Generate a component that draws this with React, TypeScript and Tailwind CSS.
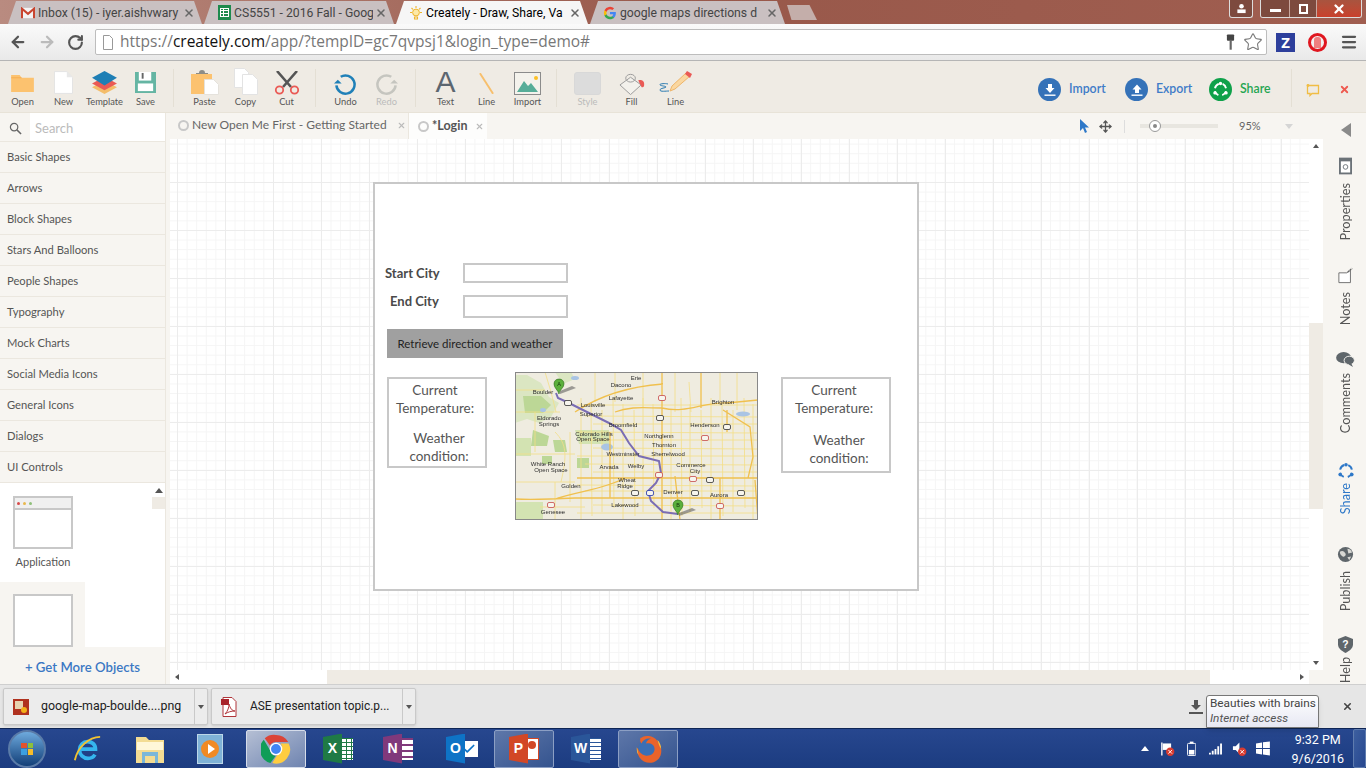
import { ArrowLeft, ArrowRight, Check, Menu, Move, RotateCw, Star, X } from 'lucide-react';
import type { ReactNode } from 'react';

const chromeFont = "font-['Open_Sans',sans-serif]";
const shellFont = "font-['Roboto',sans-serif]";

const shapes = [
  'Basic Shapes',
  'Arrows',
  'Block Shapes',
  'Stars And Balloons',
  'People Shapes',
  'Typography',
  'Mock Charts',
  'Social Media Icons',
  'General Icons',
  'Dialogs',
  'UI Controls',
];

// Browser tab strip
const BrowserTab = ({ title, icon, active, width }: { title: string; icon: ReactNode; active?: boolean; width: string }) => (
  <div
    className={`${width} h-[23px] flex items-center pl-[12px] pr-[7px] gap-[2px] [clip-path:polygon(0_100%,8px_0,calc(100%-8px)_0,100%_100%)] ${shellFont} ${
      active ? 'bg-[#f6f6f6] text-black' : 'bg-[#c9c0c1] text-[#444]'
    }`}
  >
    <span className="w-4 h-4 shrink-0 flex items-center justify-center">{icon}</span>
    <span className="flex-1 overflow-hidden whitespace-nowrap text-[12.2px] leading-[16px]">{title}</span>
    <X size={12} strokeWidth={3} className="shrink-0 text-[#666]" />
  </div>
);

const Gmail = () => (
  <svg viewBox="0 0 16 14" className="w-[14px] h-[12px]">
    <rect x="0" y="1" width="16" height="12" fill="#f3f3f3" />
    <path d="M1 13V2l7 6 7-6v11" fill="none" stroke="#c9442f" strokeWidth="2.4" />
  </svg>
);

const Sheets = () => (
  <div className="w-[13px] h-[15px] bg-[#1d8a4d] flex items-center justify-center">
    <div className="w-[9px] h-[9px] border border-white grid grid-cols-2 grid-rows-3">
      <span className="border-r border-b border-white" />
      <span className="border-b border-white" />
      <span className="border-r border-b border-white" />
      <span className="border-b border-white" />
      <span className="border-r border-white" />
      <span />
    </div>
  </div>
);

const Bulb = () => (
  <svg viewBox="0 0 16 16" className="w-4 h-4">
    <circle cx="8" cy="7.5" r="3.4" fill="#fde9a6" stroke="#eeb52e" />
    <path d="M8 1v2M2 7.5h2M12 7.5h2M3.5 3l1.4 1.4M12.5 3l-1.4 1.4M6.5 12h3v2h-3z" stroke="#eeb52e" strokeWidth="1.1" fill="none" />
  </svg>
);

const GoogleG = () => (
  <svg viewBox="0 0 16 16" className="w-[14px] h-[14px]">
    <path d="M14.7 8.2c0-.5 0-1-.1-1.4H8v2.7h3.8c-.2.9-.7 1.6-1.4 2.1v1.7h2.3c1.3-1.2 2-3 2-5.1z" fill="#4285f4" />
    <path d="M8 15c1.9 0 3.4-.6 4.7-1.7l-2.3-1.7c-.6.4-1.4.7-2.4.7-1.8 0-3.4-1.2-3.9-2.9H1.7V11A7 7 0 0 0 8 15z" fill="#34a853" />
    <path d="M4.1 9.4a4.2 4.2 0 0 1 0-2.8V4.8H1.7a7 7 0 0 0 0 6.2z" fill="#fbbc05" />
    <path d="M8 3.7c1 0 2 .4 2.7 1l2-2A7 7 0 0 0 1.700 4.800l2.400 1.800C4.600 4.900 6.200 3.700 8 3.700z" fill="#ea4335" />
  </svg>
);

// Creately toolbar
const Tool = ({ label, children, muted }: { label: string; children: ReactNode; muted?: boolean }) => (
  <div className="w-[41px] mt-[4px] shrink-0 flex flex-col items-center">
    <div className="h-[25px] flex items-end justify-center">{children}</div>
    <span className={`mt-[1px] text-[9.3px] leading-[12px] whitespace-nowrap ${muted ? 'text-[#bbb]' : 'text-[#555]'}`}>{label}</span>
  </div>
);

const ToolSep = () => <div className="w-px h-[38px] mt-[2px] bg-[#e4dfd4] shrink-0" />;

const RoundAction = ({ label, color, text, children, width }: { label: string; color: string; text: string; children: ReactNode; width: string }) => (
  <div className={`${width} flex items-center gap-[8px] shrink-0`}>
    <span className={`w-[23px] h-[23px] rounded-full ${color} flex items-center justify-center shrink-0`}>{children}</span>
    <span className={`text-[12.3px] font-semibold ${text}`}>{label}</span>
  </div>
);

const UpDown = ({ up }: { up?: boolean }) => (
  <svg viewBox="0 0 14 14" className="w-[14px] h-[14px]">
    <path d={up ? 'M7 1.500 2.500 6.500H5V10h4V6.500h2.500z' : 'M5 1v4H2.500L7 10l4.500-5H9V1z'} fill="#fff" />
    <rect x="1.500" y="11.500" width="11" height="1.400" fill="#fff" />
  </svg>
);

const ShareGlyph = ({ color, size }: { color: string; size: number }) => (
  <svg viewBox="0 0 20 20" width={size} height={size}>
    <path d="M3.500 8.500A7 7 0 0 1 8 3.300M12.500 3.500a7 7 0 0 1 4 5M16.500 12a7 7 0 0 1-4.500 4.600M7.500 16.600A7 7 0 0 1 3.400 12" fill="none" stroke={color} strokeWidth="2.200" />
    <circle cx="10" cy="3" r="2" fill={color} />
    <circle cx="3.500" cy="14" r="2" fill={color} />
    <circle cx="16.500" cy="14" r="2" fill={color} />
  </svg>
);

const mapLabels: [string, number, number][] = [
  ['Boulder', 28, 22], ['Erie', 121, 8], ['Dacono', 106, 15], ['Lafayette', 106, 28], ['Louisville', 78, 35], ['Superior', 76, 44],
  ['Brighton', 208, 32], ['Henderson', 190, 55], ['Broomfield', 108, 55], ['Eldorado', 34, 48], ['Springs', 34, 54],
  ['Northglenn', 144, 66], ['Thornton', 149, 75], ['Sherrelwood', 153, 84], ['Westminster', 108, 84], ['Arvada', 94, 97],
  ['Welby', 121, 96], ['Commerce', 176, 95], ['City', 180, 101], ['Wheat', 112, 110], ['Ridge', 110, 116], ['Denver', 158, 122],
  ['Aurora', 204, 125], ['Lakewood', 110, 135], ['Golden', 56, 116], ['Genesee', 38, 142], ['White Ranch', 33, 94], ['Open Space', 36, 100],
  ['Colorado Hills', 79, 64], ['Open Space', 78, 69],
];

const shields: [number, number, string][] = [
  [147, 26, '#c54a4a'], [53, 31, '#333'], [145, 46, '#333'], [190, 66, '#c54a4a'], [144, 103, '#c54a4a'], [178, 107, '#c54a4a'],
  [195, 108, '#333'], [120, 121, '#333'], [135, 121, '#2233aa'], [180, 121, '#333'], [226, 121, '#333'], [205, 134, '#c54a4a'], [36, 133, '#c54a4a'], [212, 55, '#333'],
];

const gridX = [66, 76, 87, 98, 108, 119, 128, 138, 156, 166, 175, 186, 196, 207, 218, 229, 238];
const gridY = [33, 44, 52, 60, 68, 76, 84, 92, 100, 113, 119, 133, 141];

// Static road map used inside the wireframe
const RouteMap = () => (
  <svg viewBox="0 0 243 148" className="w-full h-full block blur-[0.4px]">
    <rect width="243" height="148" fill="#efece0" />
    <path d="M0 3h12l14 8 8 14 10 6-8 14-12 6-12-4-12 4zM40 0h16l4 7-12 5z" fill="#dbe6c2" />
    <path d="M8 24h18l10 9-8 8H10zM18 58l16 6-2 10H16zM38 68h12l2 12H40zM62 86h12v10H62zM27 84h10v8H27z" fill="#bcd796" />
    <path d="M60 58h34v14H64zM0 66h16v18H0zM0 130h28v18H0z" fill="#d3e3b2" />
    {gridX.map((x, i) => (
      <path key={x} d={`M${x} ${26 + (i % 3) * 6}L${x + (i % 2)} ${148 - (i % 4) * 4}`} stroke="#f4de86" strokeWidth=".8" fill="none" />
    ))}
    {gridY.map((y, i) => (
      <path key={y} d={`M${62 + (i % 3) * 8} ${y}L243 ${y + (i % 2)}`} stroke="#f4de86" strokeWidth=".8" fill="none" />
    ))}
    <path d="M30 0l6 20 5 20M0 40h45M20 40v40M0 82h60M55 60v70M40 60c12 12 12 24 6 50M0 110h60M40 110v38M25 135h45M80 0v30M100 0v30M128 0v36M160 0v40M174 10l2 30M205 0v30M222 0v38M0 18h30" stroke="#f4de86" strokeWidth=".8" fill="none" />
    <ellipse cx="92" cy="75" rx="6" ry="3.500" fill="#a9c4e4" />
    <ellipse cx="228" cy="42" rx="7" ry="2.500" fill="#a9c4e4" />
    <ellipse cx="60" cy="6" rx="4" ry="2" fill="#a9c4e4" />
    <ellipse cx="28" cy="38" rx="3" ry="2" fill="#a9c4e4" />
    <path d="M147 0v148M0 127c20 1 40 0 60-1h183M62 106h181M147 36c25 6 40-6 65-5l31-3M208 38l27 17 3 30-5 21M100 40c15-6 30-4 47-4M186 0v36M212 38v22M148 12C120 14 90 20 60 40M160 104l5 44M205 106v42M95 126V60M40 127c24-8 50-10 70-21M240 108l3 40" stroke="#f0c04e" strokeWidth="1.300" fill="none" />
    <path d="M41 21l2 5 11 5 20 10 20 10 12 7 8 13 10 13 20 5 2 12-5 10-8 8 3 10 12 11 15 2" fill="none" stroke="#7a6db4" strokeWidth="2" />
    {shields.map(([x, y, c]) => (
      <rect key={`${x}-${y}`} x={x - 3.500} y={y - 2.500} width="7" height="5" rx="1.500" fill="#f7f5ee" stroke={c} strokeWidth=".8" />
    ))}
    {mapLabels.map(([t, x, y], i) => (
      <text key={`${t}-${i}`} x={x} y={y} fontSize="6" fill="#2c2c2c" fontFamily="Liberation Sans, sans-serif" textAnchor="middle">{t}</text>
    ))}
    <path d="M45 19l12-5 4 2-16 6zM164 141l13-5 4 2-17 6z" fill="#555" opacity=".55" />
    <path d="M39 12c0-3 2-5 5-5s5 2 5 5c0 4-5 6-5 10-1-4-5-6-5-10zM158 133c0-3 2-5 5-5s5 2 5 5c0 4-5 6-5 10-1-4-5-6-5-10z" fill="#5bb03c" stroke="#2f6c1f" strokeWidth=".6" />
    <text x="44" y="14" fontSize="5.500" fill="#12330a" textAnchor="middle" fontFamily="Liberation Sans, sans-serif">A</text>
    <text x="163" y="135" fontSize="5.500" fill="#12330a" textAnchor="middle" fontFamily="Liberation Sans, sans-serif">B</text>
    <rect x="0.500" y="0.500" width="242" height="147" fill="none" stroke="#888" />
  </svg>
);

const RailItem = ({ label, icon, blue, height, gap }: { label: string; icon: ReactNode; blue?: boolean; height: string; gap: string }) => (
  <div className={`${height} ${gap} flex flex-col items-center shrink-0`}>
    <span className="h-[18px] flex items-center justify-center">{icon}</span>
    <span className={`[writing-mode:vertical-rl] rotate-180 text-[12.7px] leading-none whitespace-nowrap ${blue ? 'text-[#2e78c8]' : 'text-[#555]'}`}>{label}</span>
  </div>
);

const TaskItem = ({ children, tone, width }: { children: ReactNode; tone?: 'open' | 'focus'; width?: string }) => (
  <div
    className={`${width ?? 'w-[60px]'} h-[38px] shrink-0 flex items-center justify-center rounded-[2px] ${
      tone === 'focus'
        ? 'border border-[#d5dcea] bg-gradient-to-br from-[#b5bfd4] to-[#6f84b0]'
        : tone === 'open'
          ? 'border border-[#8c9fc4] bg-gradient-to-br from-[#5e77a9] to-[#35548f]'
          : ''
    }`}
  >
    {children}
  </div>
);

const OfficeIcon = ({ letter, bg, lines }: { letter: string; bg: string; lines: string }) => (
  <div className="relative w-[30px] h-[30px] flex items-center">
    <div className={`absolute right-0 top-[4px] w-[17px] h-[22px] ${lines}`} />
    <div className={`relative w-[19px] h-[30px] ${bg} text-white font-bold text-[14px] flex items-center justify-center font-['Liberation_Sans',sans-serif] [clip-path:polygon(0_12%,100%_0,100%_100%,0_88%)]`}>
      {letter}
    </div>
  </div>
);

export default function App() {
  return (
    <div className="w-[1366px] h-[768px] overflow-hidden flex flex-col font-['Lato',sans-serif] bg-[#f7f5f1]">
      {/* Tab strip */}
      <div className="h-[24px] shrink-0 flex items-end pl-[8px] bg-gradient-to-r from-[#b98b80] via-[#98584a] to-[#a05e50]">
        <div className="flex gap-[2px] items-end">
          <BrowserTab title="Inbox (15) - iyer.aishvwary" icon={<Gmail />} width="w-[194px]" />
          <BrowserTab title="CS5551 - 2016 Fall - Goog" icon={<Sheets />} width="w-[190px]" />
          <BrowserTab title="Creately - Draw, Share, Va" icon={<Bulb />} active width="w-[192px]" />
          <BrowserTab title="google maps directions d" icon={<GoogleG />} width="w-[195px]" />
          <div className="w-[30px] h-[15px] mb-[4px] bg-[#c4aeaa] [clip-path:polygon(0_0,75%_0,100%_100%,15%_100%)]" />
        </div>
        <div className="ml-auto self-start flex gap-[7px] mr-[4px]">
          <div className="w-[24px] h-[18px] border border-[#ddd] border-t-0 rounded-b-[3px] bg-[#7d4a3e] flex items-center justify-center">
            <svg viewBox="0 0 12 12" className="w-[11px] h-[11px]"><circle cx="6" cy="3.500" r="2.500" fill="#fff" /><rect x="1.500" y="7" width="9" height="4" fill="#fff" /></svg>
          </div>
          <div className="w-[102px] h-[18px] border border-[#ddd] border-t-0 rounded-b-[3px] flex overflow-hidden">
            <div className="w-[28px] bg-[#7d4a3e] flex items-end justify-center pb-[5px]"><span className="w-[11px] h-[3px] bg-white" /></div>
            <div className="w-[28px] bg-[#7d4a3e] border-x border-[#c9a89f] flex items-center justify-center">
              <span className="w-[9px] h-[10px] border-2 border-white" />
            </div>
            <div className="flex-1 bg-gradient-to-b from-[#a8543f] to-[#c9402c] flex items-center justify-center">
              <X size={14} strokeWidth={4} className="text-white" />
            </div>
          </div>
        </div>
      </div>

      {/* Browser toolbar */}
      <div className={`h-[37px] shrink-0 flex items-center bg-gradient-to-b from-[#fafafa] to-[#e9e9e9] border-b border-[#b5b5b5] ${chromeFont}`}>
        <ArrowLeft size={18} strokeWidth={3} className="ml-[9px] text-[#555]" />
        <ArrowRight size={18} strokeWidth={3} className="ml-[11px] text-[#bbb]" />
        <RotateCw size={17} strokeWidth={3} className="ml-[11px] text-[#555]" />
        <div className="ml-[11px] w-[1172px] h-[26px] bg-white border border-[#bdbdbd] rounded-[2px] flex items-center pl-[6px] pr-[3px]">
          <svg viewBox="0 0 12 15" className="w-[12px] h-[15px] shrink-0"><path d="M1.500.5h6l3 3v11h-9z" fill="#fff" stroke="#999" /></svg>
          <span className="ml-[6px] text-[15.5px] whitespace-nowrap text-[#777] leading-none">
            https://<span className="text-[#111]">creately.com</span>/app/?tempID=gc7qvpsj1&amp;login_type=demo#
          </span>
          <svg viewBox="0 0 10 18" className="ml-auto w-[9px] h-[17px]"><rect x="1" y="0" width="8" height="7" rx="1" fill="#444" /><rect x="4" y="6" width="2.400" height="11" fill="#666" /></svg>
          <Star size={20} strokeWidth={1.300} className="ml-[8px] text-[#777]" />
        </div>
        <div className="ml-[9px] w-[19px] h-[19px] bg-[#2d3f9c] text-white font-bold text-[15px] flex items-center justify-center leading-none">Z</div>
        <div className="ml-[13px] w-[19px] h-[19px] rounded-full border-[3px] border-[#e0161f] flex items-center justify-center">
          <span className="w-[7px] h-[11px] rounded-t-[3px] bg-[#ef7f7f]" />
        </div>
        <Menu size={18} strokeWidth={3} className="ml-[13px] text-[#555]" />
      </div>

      {/* Creately toolbar */}
      <div className="h-[52px] shrink-0 bg-[#efebe4] border-b border-[#e8e3d8] flex items-center pl-[2px]">
        <Tool label="Open">
          <svg viewBox="0 0 24 19" className="w-[23px] h-[18px] mb-[3px]"><path d="M0 1h9l2 3h13v15H0z" fill="#fcc26f" /><path d="M0 4h11" stroke="#f6ae50" /></svg>
        </Tool>
        <Tool label="New">
          <svg viewBox="0 0 20 24" className="w-[19px] h-[23px] mb-[1px]"><path d="M.5.5h13l6 6v17H.5z" fill="#fff" stroke="#e3e3e3" /><path d="M13.500.5v6h6" fill="#e8e8e8" /></svg>
        </Tool>
        <Tool label="Template">
          <svg viewBox="0 0 26 24" className="w-[25px] h-[23px] mb-[1px]">
            <path d="M13 10 26 17 13 24 0 17z" fill="#f4bd6a" />
            <path d="M13 6 26 13 13 20 0 13z" fill="#ea5a55" />
            <path d="M13 0 26 7 13 15 0 7z" fill="#1f7fb5" />
          </svg>
        </Tool>
        <Tool label="Save">
          <svg viewBox="0 0 22 22" className="w-[21px] h-[21px] mb-[2px]">
            <rect x="0" y="0" width="22" height="22" fill="#65b5a3" />
            <rect x="4" y="0" width="13" height="9" fill="#fff" />
            <rect x="7" y="1" width="2" height="6" fill="#666" />
            <rect x="3" y="12" width="16" height="8" fill="#fff" />
          </svg>
        </Tool>
        <div className="w-[7px] shrink-0" />
        <ToolSep />
        <div className="w-[10px] shrink-0" />
        <Tool label="Paste">
          <svg viewBox="0 0 28 25" className="w-[28px] h-[25px]">
            <rect x="0" y="4" width="21" height="20" fill="#fcc26f" />
            <path d="M5 4h12v-1h-3a3 3 0 0 0-6 0H5z" fill="#8d8d88" />
            <path d="M13.500 9.500h9l5 5v10h-14z" fill="#fff" stroke="#e5e2dc" />
          </svg>
        </Tool>
        <Tool label="Copy">
          <svg viewBox="0 0 24 27" className="w-[24px] h-[27px]">
            <path d="M.5.5h10l4 4v15H.5z" fill="#fff" stroke="#e3e3e3" />
            <path d="M8.500 6.500h10l5 5v15h-15z" fill="#fff" stroke="#e3e3e3" />
          </svg>
        </Tool>
        <Tool label="Cut">
          <svg viewBox="0 0 26 24" className="w-[26px] h-[24px]">
            <path d="M3 0 17 16M23 0 9 16" stroke="#555" strokeWidth="2.600" />
            <circle cx="5.500" cy="19" r="3.700" fill="none" stroke="#ea5a55" strokeWidth="1.800" />
            <circle cx="20.500" cy="19" r="3.700" fill="none" stroke="#ea5a55" strokeWidth="1.800" />
          </svg>
        </Tool>
        <div className="w-[8px] shrink-0" />
        <ToolSep />
        <div className="w-[9px] shrink-0" />
        <Tool label="Undo">
          <svg viewBox="0 0 24 24" className="w-[23px] h-[23px]">
            <path d="M7 5a9.500 9.500 0 1 1-4.500 9" fill="none" stroke="#1f80b8" strokeWidth="2.600" />
            <path d="M0 12l4-4 4 4z" fill="#1f80b8" />
          </svg>
        </Tool>
        <Tool label="Redo" muted>
          <svg viewBox="0 0 24 24" className="w-[23px] h-[23px]">
            <path d="M17 5a9.500 9.500 0 1 0 4.500 9" fill="none" stroke="#c5c5bf" strokeWidth="2.600" />
            <path d="M24 12l-4-4-4 4z" fill="#c5c5bf" />
          </svg>
        </Tool>
        <div className="w-[8px] shrink-0" />
        <ToolSep />
        <div className="w-[9px] shrink-0" />
        <Tool label="Text">
          <span className="text-[30px] leading-[26px] text-[#5c6670] font-['Liberation_Sans',sans-serif]">A</span>
        </Tool>
        <Tool label="Line">
          <svg viewBox="0 0 16 22" className="w-[15px] h-[21px] mb-[1px]"><path d="M1 0 15 22" stroke="#f7bf6c" strokeWidth="2" /></svg>
        </Tool>
        <Tool label="Import">
          <svg viewBox="0 0 27 23" className="w-[27px] h-[23px]">
            <rect x=".5" y=".5" width="26" height="22" fill="#f4f2ec" stroke="#8b8b8b" />
            <circle cx="22" cy="6" r="2" fill="#fcc026" />
            <path d="M3 20 10 9l4 5 3-3 7 9z" fill="#57ad98" />
          </svg>
        </Tool>
        <div className="w-[8px] shrink-0" />
        <ToolSep />
        <div className="w-[10px] shrink-0" />
        <Tool label="Style" muted>
          <div className="w-[27px] h-[23px] bg-[#dcdcdc] border border-[#d8d8d8] rounded-[3px]" />
        </Tool>
        <div className="w-[3px] shrink-0" />
        <Tool label="Fill">
          <svg viewBox="0 0 27 23" className="w-[26px] h-[23px]">
            <path d="M12 5 1 13l11 10 11-10z" fill="#f3f1ec" stroke="#9a9a9a" />
            <ellipse cx="12" cy="6" rx="5" ry="4" fill="none" stroke="#9a9a9a" />
            <path d="M20 8c4-1 7 1 6 6-1 2-3 2-3 0-1-2-2-3-3-6z" fill="#ea5a55" />
          </svg>
        </Tool>
        <div className="w-[3px] shrink-0" />
        <Tool label="Line">
          <svg viewBox="0 0 33 22" className="w-[33px] h-[22px] mb-[2px]">
            <path d="M27 2 13 15l-2 5 5-2L31 5z" fill="#fad7a0" stroke="#eeb56a" />
            <path d="M26 3l2-3 5 3-2 4z" fill="#ea5a55" />
            <path d="M9 13c-4-1-9 0-8 1s6 1 6 2-6 1-6 3 6 1 9 1" fill="none" stroke="#2779b0" strokeWidth="1" />
          </svg>
        </Tool>

        <div className="ml-[342px] flex items-center">
          <RoundAction label="Import" color="bg-[#3572b8]" text="text-[#3f7cc8]" width="w-[87px] mt-[6px]"><UpDown /></RoundAction>
          <RoundAction label="Export" color="bg-[#3572b8]" text="text-[#3f7cc8]" width="w-[84px] mt-[6px]"><UpDown up /></RoundAction>
          <RoundAction label="Share" color="bg-[#0fa14a]" text="text-[#25a551]" width="w-[82px] mt-[6px]"><ShareGlyph color="#fff" size={17} /></RoundAction>
          <div className="w-px h-[38px] mt-[2px] bg-[#e4dfd4]" />
          <svg viewBox="0 0 14 14" className="ml-[14px] mt-[6px] w-[14px] h-[14px]">
            <path d="M1.500 2.500h11v8H6l-2 2v-2H1.500z" fill="none" stroke="#f0bd45" strokeWidth="1.300" />
            <circle cx="2" cy="2.500" r="1.400" fill="#f0bd45" />
          </svg>
          <X size={11} strokeWidth={4} className="ml-[19px] mt-[6px] text-[#ee5a50]" />
        </div>
      </div>

      {/* Workspace */}
      <div className="flex-1 min-h-0 flex">
        <aside className="w-[166px] shrink-0 flex flex-col border-r border-[#ebe7df]">
          <div className="h-[29px] shrink-0 flex border-b border-[#ebe7df]">
            <div className="w-[30px] flex items-center justify-center pt-[2px]">
              <svg viewBox="0 0 14 14" className="w-[13px] h-[13px]"><circle cx="5.500" cy="5.500" r="4" fill="none" stroke="#666" strokeWidth="1.300" /><path d="M8.500 8.500 13 13" stroke="#666" strokeWidth="1.600" /></svg>
            </div>
            <div className="flex-1 bg-white flex items-center pl-[5px] pt-[3px] text-[13px] text-[#bbb]">Search</div>
          </div>
          {shapes.map((s) => (
            <div key={s} className="h-[31px] shrink-0 flex items-center pl-[7px] border-b border-[#ebe7df] text-[11.2px] text-[#555]">{s}</div>
          ))}
          <div className="h-[164px] shrink-0 flex bg-white">
            <div className="w-[152px] flex flex-col">
              <div className="h-[99px] shrink-0 pl-[13px] pt-[13px]">
                <div className="w-[60px] h-[53px] border-2 border-[#c8c8c8] bg-white">
                  <div className="h-[10px] bg-[#f0f0f0] border-b-2 border-[#c8c8c8] box-content flex items-center gap-[3px] pl-[2px]">
                    <span className="w-[3px] h-[3px] rounded-full bg-[#d84a4a]" />
                    <span className="w-[3px] h-[3px] rounded-full bg-[#e8b84e]" />
                    <span className="w-[3px] h-[3px] rounded-full bg-[#8fc07a]" />
                  </div>
                </div>
                <div className="w-[60px] mt-[5px] text-center text-[11px] text-[#555] whitespace-nowrap">Application</div>
              </div>
              <div className="w-[85px] flex-1 bg-[#f7f5f1] pl-[13px] pt-[12px]">
                <div className="w-[60px] h-[53px] border-2 border-[#c8c8c8] bg-white" />
              </div>
            </div>
            <div className="flex-1 flex flex-col">
              <div className="h-[14px] flex items-center justify-center"><span className="w-0 h-0 border-x-[4px] border-x-transparent border-b-[5px] border-b-[#555]" /></div>
              <div className="h-[12px] bg-[#efebe4]" />
            </div>
          </div>
          <div className="flex-1 flex items-center justify-center pt-[4px] text-[13.2px] font-semibold text-[#3b78c4]">+ Get More Objects</div>
        </aside>

        <div className="flex-1 min-w-0 flex flex-col">
          {/* Document tabs */}
          <div className="h-[26px] shrink-0 flex items-center">
            <div className="w-[243px] h-full pl-[12px] flex items-center gap-[3px] text-[12px] text-[#666] border-r border-[#ebe7df] pb-[2px]">
              <span className="w-[11px] h-[11px] rounded-full border-2 border-[#c8c8c8] shrink-0" />
              <span className="whitespace-nowrap">New Open Me First - Getting Started</span>
              <X size={9} strokeWidth={3} className="ml-[7px] text-[#bbb] shrink-0" />
            </div>
            <div className="w-[78px] h-full pl-[9px] flex items-center gap-[3px] text-[12.5px] font-bold text-[#555] bg-[#fdfdfc]">
              <span className="w-[11px] h-[11px] rounded-full border-2 border-[#c8c8c8] shrink-0" />
              <span className="whitespace-nowrap">*Login</span>
              <X size={9} strokeWidth={3} className="ml-[5px] text-[#bbb] shrink-0" />
            </div>
            <svg viewBox="0 0 10 14" className="ml-[592px] w-[10px] h-[14px]"><path d="M1 0v12l3-3 2 5 2-1-2-4.500h4z" fill="#2e78c8" /></svg>
            <Move size={13} strokeWidth={2.400} className="ml-[10px] text-[#555]" />
            <div className="ml-[12px] w-px h-[13px] bg-[#ddd]" />
            <div className="relative ml-[15px] w-[78px] h-[4px] bg-[#e8e6e0]">
              <span className="absolute left-[9px] -top-[4px] w-[12px] h-[12px] rounded-full bg-white border border-[#999] flex items-center justify-center">
                <span className="w-[4px] h-[4px] rounded-full bg-[#888]" />
              </span>
            </div>
            <span className="ml-[21px] text-[11px] text-[#666]">95%</span>
            <span className="ml-[24px] w-0 h-0 border-x-[4px] border-x-transparent border-t-[5px] border-t-[#d5d5d5]" />
          </div>

          <div className="flex-1 min-h-0 flex pl-[4px]">
            {/* Drawing canvas */}
            <div className="relative flex-1 bg-white bg-[linear-gradient(#ececec_1px,transparent_1px),linear-gradient(90deg,#ececec_1px,transparent_1px),linear-gradient(#f5f5f5_1px,transparent_1px),linear-gradient(90deg,#f5f5f5_1px,transparent_1px)] bg-[size:48px_48px,48px_48px,9.6px_9.6px,9.6px_9.6px] [background-position:7px_43px]">
              <div className="absolute left-[203px] top-[43px] w-[546px] h-[409px] bg-white border-2 border-[#c8c8c8]">
                <span className="absolute left-[10px] top-[80px] text-[13px] font-bold text-[#4a4a4a] whitespace-nowrap">Start City</span>
                <span className="absolute left-[15px] top-[108px] text-[13px] font-bold text-[#4a4a4a] whitespace-nowrap">End City</span>
                <div className="absolute left-[88px] top-[79px] w-[105px] h-[20px] border-2 border-[#c8c8c8]" />
                <div className="absolute left-[88px] top-[111px] w-[105px] h-[23px] border-2 border-[#c8c8c8]" />
                <div className="absolute left-[12px] top-[145px] w-[176px] h-[29px] bg-[#a0a0a0] flex items-center justify-center text-[11.5px] text-[#222] whitespace-nowrap">Retrieve direction and weather</div>
                <div className="absolute left-[12px] top-[193px] w-[100px] h-[91px] border-2 border-[#c8c8c8] text-[13.5px] leading-[18px] text-[#555] text-center">
                  <div className="pt-[2px] pr-[4px]">Current<br />Temperature:</div>
                  <div className="pt-[12px] pl-[4px]">Weather<br />condition:</div>
                </div>
                <div className="absolute left-[140px] top-[188px] w-[243px] h-[148px]"><RouteMap /></div>
                <div className="absolute left-[406px] top-[193px] w-[110px] h-[96px] border-2 border-[#c8c8c8] text-[13.5px] leading-[18px] text-[#555] text-center">
                  <div className="pt-[2px] pr-[4px]">Current<br />Temperature:</div>
                  <div className="pt-[14px] pl-[6px]">Weather<br />condition:</div>
                </div>
              </div>
            </div>
            {/* Vertical scrollbar */}
            <div className="w-[14px] shrink-0 bg-white flex flex-col">
              <div className="h-[14px] flex items-center justify-center"><span className="w-0 h-0 border-x-[3px] border-x-transparent border-b-[4px] border-b-[#555]" /></div>
              <div className="h-[170px]" />
              <div className="h-[186px] bg-[#efebe4]" />
              <div className="flex-1" />
              <div className="h-[14px] flex items-center justify-center"><span className="w-0 h-0 border-x-[3px] border-x-transparent border-t-[4px] border-t-[#555]" /></div>
            </div>
          </div>
          {/* Horizontal scrollbar */}
          <div className="h-[14px] shrink-0 ml-[4px] mr-[14px] flex items-center bg-white">
            <div className="w-[14px] flex items-center justify-center"><span className="w-0 h-0 border-y-[3px] border-y-transparent border-r-[4px] border-r-[#555]" /></div>
            <div className="w-[143px]" />
            <div className="w-[883px] h-full bg-[#efebe4]" />
            <div className="flex-1" />
            <div className="w-[14px] flex items-center justify-center"><span className="w-0 h-0 border-y-[3px] border-y-transparent border-l-[4px] border-l-[#555]" /></div>
          </div>
        </div>

        {/* Right rail */}
        <div className="w-[43px] shrink-0 flex flex-col items-center pt-[10px] pl-[2px] overflow-hidden">
          <span className="w-0 h-0 border-y-[7px] border-y-transparent border-r-[10px] border-r-[#8a8a8a] shrink-0" />
          <div className="mt-[20px] flex flex-col items-center">
            <RailItem label="Properties" height="h-[109px]" gap="gap-[8px]" icon={
              <svg viewBox="0 0 14 18" className="w-[13px] h-[18px]"><rect width="14" height="18" fill="#6b7278" /><rect x="2" y="4" width="10" height="12" fill="#fff" /><circle cx="7" cy="10" r="2.500" fill="none" stroke="#6b7278" /></svg>
            } />
            <RailItem label="Notes" height="h-[84px]" gap="gap-[8px]" icon={
              <svg viewBox="0 0 18 18" className="w-[16px] h-[17px]"><path d="M1 6h9l4-3v14H1z" fill="#fff" stroke="#666" /><path d="M11 5l5-4" stroke="#666" strokeWidth="1.600" strokeDasharray="2 1" /></svg>
            } />
            <RailItem label="Comments" height="h-[112px]" gap="gap-[5px]" icon={
              <svg viewBox="0 0 20 16" className="w-[19px] h-[15px]"><ellipse cx="8" cy="6" rx="8" ry="6" fill="#5f666b" /><ellipse cx="14" cy="9" rx="5.500" ry="4.500" fill="#5f666b" stroke="#f7f5f1" /><path d="M16 12l2 4-5-3z" fill="#5f666b" /></svg>
            } />
            <RailItem blue label="Share" height="h-[83px]" gap="gap-[3px]" icon={<ShareGlyph color="#2e78c8" size={18} />} />
            <RailItem label="Publish" height="h-[90px]" gap="gap-[8px]" icon={
              <svg viewBox="0 0 18 18" className="w-[17px] h-[17px]"><circle cx="9" cy="9" r="8" fill="#5f666b" /><path d="M3 6c3-2 5 0 6 2s-1 4-3 3-3-3-3-5zM11 3c2 0 4 1 5 4l-4 1zM11 12l4-1-2 4z" fill="#d8d8d4" /></svg>
            } />
            <RailItem label="Help" height="h-[60px]" gap="gap-[4px]" icon={
              <svg viewBox="0 0 16 18" className="w-[15px] h-[17px]"><path d="M8 0l8 3v6c0 4-4 7-8 9-4-2-8-5-8-9V3z" fill="#5f666b" /><text x="8" y="13" textAnchor="middle" fontSize="11" fontWeight="700" fill="#fff" fontFamily="Liberation Sans, sans-serif">?</text></svg>
            } />
          </div>
        </div>
      </div>

      {/* Downloads bar */}
      <div className={`h-[44px] shrink-0 bg-[#e6e6e6] border-t border-[#cfcfcf] flex items-center pl-[3px] relative ${shellFont}`}>
        <div className="w-[205px] h-[37px] border border-[#c9c9c9] rounded-[2px] flex items-center bg-[#ececec] shadow-sm">
          <svg viewBox="0 0 16 16" className="ml-[9px] w-[16px] h-[16px]"><rect width="16" height="16" fill="#b0321f" /><rect x="2" y="2" width="8" height="8" fill="#e7d3b0" /><circle cx="11" cy="11" r="3" fill="#f3b019" /></svg>
          <span className="ml-[12px] flex-1 text-[12.4px] text-[#222] whitespace-nowrap">google-map-boulde....png</span>
          <div className="w-[13px] h-full border-l border-[#c9c9c9] flex items-center justify-center"><span className="w-0 h-0 border-x-[3px] border-x-transparent border-t-[4px] border-t-[#555]" /></div>
        </div>
        <div className="ml-[3px] w-[205px] h-[37px] border border-[#c9c9c9] rounded-[2px] flex items-center bg-[#ececec] shadow-sm">
          <svg viewBox="0 0 16 20" className="ml-[9px] w-[16px] h-[20px]"><path d="M2 .5h9l4 4v15H2z" fill="#fff" stroke="#b0353a" /><rect y="2" width="8" height="6" fill="#a8232a" /><path d="M4 17c3-3 4-7 4-10 1 4 3 7 6 7-4 0-7 1-10 3z" fill="none" stroke="#b0353a" /></svg>
          <span className="ml-[13px] flex-1 text-[11.9px] text-[#222] whitespace-nowrap">ASE presentation topic.p...</span>
          <div className="w-[13px] h-full border-l border-[#c9c9c9] flex items-center justify-center"><span className="w-0 h-0 border-x-[3px] border-x-transparent border-t-[4px] border-t-[#555]" /></div>
        </div>
        <svg viewBox="0 0 14 14" className="ml-[773px] w-[14px] h-[14px]"><path d="M5 0h4v5h3L7 10 2 5h3z" fill="#555" /><rect y="12" width="14" height="2" fill="#555" /></svg>
        <X size={11} strokeWidth={3.500} className="absolute left-[1342px] top-[16px] text-[#444]" />
        {/* Tooltip */}
        <div className="absolute left-[1206px] top-[10px] w-[113px] h-[33px] bg-gradient-to-b from-white to-[#e7e8f3] border border-[#777] rounded-t-[3px] shadow-md px-[3px] text-[11.8px] leading-[15px] text-[#444] whitespace-nowrap">
          <div>Beauties with brains</div>
          <div className="italic text-[#555]">Internet access</div>
        </div>
      </div>

      {/* Windows taskbar */}
      <div className={`h-[40px] shrink-0 flex items-center bg-gradient-to-b from-[#27478f] to-[#1c3c80] border-t border-[#0f2655] ${shellFont}`}>
        <TaskItem width="w-[54px]">
          <div className="w-[38px] h-[38px] rounded-full border-2 border-[#5a7ba8] bg-gradient-to-b from-[#6eaadd] to-[#123f78] grid grid-cols-2 gap-[1px] p-[11px]">
            <span className="bg-[#e2512c]" /><span className="bg-[#8cc03b]" /><span className="bg-[#3c9fe0]" /><span className="bg-[#f7bd29]" />
          </div>
        </TaskItem>
        <TaskItem width="w-[66px]">
          <svg viewBox="0 0 32 32" className="w-[30px] h-[30px]">
            <path d="M8 16h17c0-5-4-8-8.500-8S8 12 8 17s4 9 9 9c3 0 6-1.500 7.500-4" fill="none" stroke="#35b6ee" strokeWidth="4" />
            <path d="M3 28C6 14 18 3 30 3" fill="none" stroke="#f2c230" strokeWidth="2" />
          </svg>
        </TaskItem>
        <TaskItem>
          <svg viewBox="0 0 32 30" className="w-[32px] h-[30px]"><path d="M2 3h10l3 3h15v23H2z" fill="#f3dc93" /><rect x="3" y="8" width="26" height="8" fill="#fff7d8" /><path d="M8 18h16v11h-3v-7H11v7H8z" fill="#7ab7d9" /></svg>
        </TaskItem>
        <TaskItem>
          <div className="w-[26px] h-[30px] bg-[#7fb2d6] border border-[#bcd7e8] flex items-center justify-center">
            <span className="w-[18px] h-[18px] rounded-full bg-[#f08a24] flex items-center justify-center"><span className="w-0 h-0 border-y-[5px] border-y-transparent border-l-[7px] border-l-white ml-[2px]" /></span>
          </div>
        </TaskItem>
        <div className="w-[6px] shrink-0" />
        <TaskItem tone="focus">
          <svg viewBox="0 0 32 32" className="w-[30px] h-[30px]">
            <path d="M16 1a15 15 0 0 1 13 7.500H16a7.500 7.500 0 0 0-6.500 3.800L4 4.500A15 15 0 0 1 16 1z" fill="#db4437" />
            <path d="M3 6l6.500 11a7.500 7.500 0 0 0 6 6.400L10 31A15 15 0 0 1 3 6z" fill="#0f9d58" />
            <path d="M29.500 10a15 15 0 0 1-17.500 21l6-10a7.500 7.500 0 0 0 3-11z" fill="#ffcd40" />
            <circle cx="16" cy="16" r="6" fill="#4285f4" stroke="#fff" strokeWidth="1.400" />
          </svg>
        </TaskItem>
        <div className="w-[2px] shrink-0" />
        <TaskItem><OfficeIcon letter="X" bg="bg-[#1f7a45]" lines="bg-white bg-[linear-gradient(#1f7a45_1px,transparent_1px),linear-gradient(90deg,#1f7a45_1px,transparent_1px)] bg-[size:5px_4px]" /></TaskItem>
        <TaskItem><OfficeIcon letter="N" bg="bg-[#80397b]" lines="bg-white bg-[linear-gradient(#80397b_2px,transparent_2px)] bg-[size:6px_6px]" /></TaskItem>
        <div className="w-[4px] shrink-0" />
        <TaskItem>
          <div className="relative w-[32px] h-[30px] flex items-center">
            <div className="absolute right-0 top-[7px] w-[18px] h-[16px] bg-white flex items-center justify-center"><Check size={14} strokeWidth={3} className="text-[#0e73c6]" /></div>
            <div className="relative w-[19px] h-[30px] bg-[#0e73c6] text-white font-bold text-[14px] flex items-center justify-center font-['Liberation_Sans',sans-serif] [clip-path:polygon(0_12%,100%_0,100%_100%,0_88%)]">O</div>
          </div>
        </TaskItem>
        <div className="w-[2px] shrink-0" />
        <TaskItem tone="open">
          <div className="relative w-[30px] h-[30px] flex items-center">
            <div className="absolute right-0 top-[4px] w-[17px] h-[22px] bg-white border border-[#d24726] flex items-start justify-end p-[2px]"><span className="w-[8px] h-[8px] rounded-full bg-[#d24726]" /></div>
            <div className="relative w-[19px] h-[30px] bg-[#d24726] text-white font-bold text-[14px] flex items-center justify-center font-['Liberation_Sans',sans-serif] [clip-path:polygon(0_12%,100%_0,100%_100%,0_88%)]">P</div>
          </div>
        </TaskItem>
        <div className="w-[2px] shrink-0" />
        <TaskItem><OfficeIcon letter="W" bg="bg-[#2a5699]" lines="bg-white bg-[linear-gradient(#2a5699_1px,transparent_1px)] bg-[size:4px_4px]" /></TaskItem>
        <div className="w-[2px] shrink-0" />
        <TaskItem tone="open">
          <svg viewBox="0 0 32 32" className="w-[30px] h-[30px]">
            <circle cx="17" cy="15" r="11" fill="#3a6fb5" />
            <path d="M8 4c-1 3 0 5 1 6 2-4 6-6 10-5-3 1-5 3-5 5 4-1 9 1 9 6 0 5-5 8-10 7-4-1-7-4-8-8C4 15 4 20 7 25c3 5 10 7 15 5 6-2 9-8 8-14-1-7-6-13-13-14-3 0-6 0-8 2z" fill="#e9632a" />
            <path d="M26 6c3 3 4 7 4 10-2-3-3-7-4-10zM4 14c0 3 0 6 2 8-1-3-1-6-2-8z" fill="#fbc23b" />
          </svg>
        </TaskItem>

        {/* Tray */}
        <span className="ml-[463px] w-0 h-0 border-x-[4px] border-x-transparent border-b-[5px] border-b-white" />
        <svg viewBox="0 0 16 16" className="ml-[11px] w-[16px] h-[16px]"><path d="M2 1v14" stroke="#fff" strokeWidth="1.500" /><path d="M3 2h9v7H3z" fill="#fff" /><circle cx="11" cy="11" r="4.500" fill="#d83b30" /><path d="M9 9l4 4M13 9l-4 4" stroke="#fff" /></svg>
        <svg viewBox="0 0 10 16" className="ml-[12px] w-[10px] h-[16px]"><rect x=".5" y="2" width="9" height="13" rx="1" fill="none" stroke="#fff" /><rect x="3" y="0" width="4" height="2" fill="#fff" /><rect x="2" y="9" width="6" height="5" fill="#fff" /></svg>
        <svg viewBox="0 0 16 12" className="ml-[13px] w-[16px] h-[12px]"><path d="M0 10h2v2H0zM3 8h2v4H3zM6 6h2v6H6zM9 3h2v9H9zM12 0h2v12h-2z" fill="#fff" /></svg>
        <svg viewBox="0 0 16 16" className="ml-[8px] w-[16px] h-[16px]"><path d="M1 5h3l4-4v12L4 9H1z" fill="#fff" /><circle cx="11" cy="11" r="4.500" fill="#d83b30" /><path d="M9 9l4 4M13 9l-4 4" stroke="#fff" /></svg>
        <svg viewBox="0 0 15 15" className="ml-[9px] w-[15px] h-[15px]"><path d="M0 2l6.500-1v6H0zM7.500.8 15 0v7H7.500zM0 8h6.500v6L0 13zM7.500 8H15v7l-7.500-1z" fill="#fff" /></svg>
        <div className="ml-[13px] w-[76px] text-center text-white text-[12.5px] leading-[19px] whitespace-nowrap">
          <div>9:32 PM</div>
          <div>9/6/2016</div>
        </div>
        <div className="ml-auto w-[14px] h-full border border-[#5f7cae] rounded-[2px] bg-gradient-to-br from-[#3d5f9f] to-[#27478f]" />
      </div>
    </div>
  );
}
